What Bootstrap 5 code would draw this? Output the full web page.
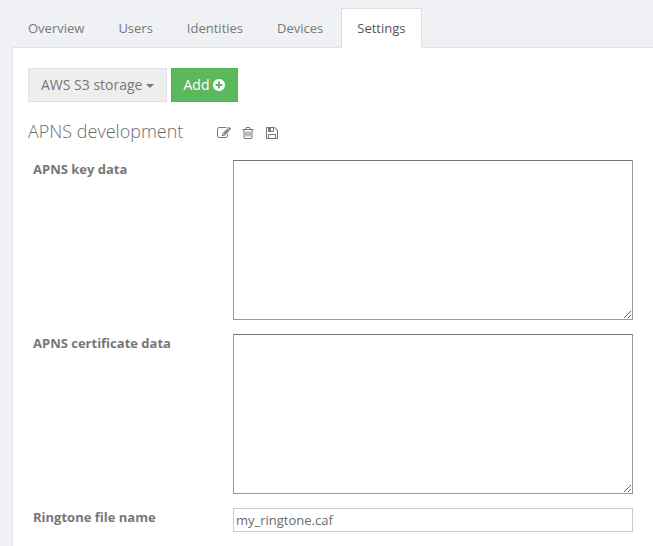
<!DOCTYPE html>
<html lang="en">
<head>
<meta charset="utf-8">
<meta name="viewport" content="width=device-width, initial-scale=1">
<title>Settings</title>
<link href="https://cdn.jsdelivr.net/npm/bootstrap@5.3.0/dist/css/bootstrap.min.css" rel="stylesheet">
<style>
body { font-family: "Open Sans", sans-serif; font-size: 13px; line-height: 18.57px; color: #6a6c6f; background: #f0f1f5; height: 546px; overflow: hidden; }
.page { padding: 8px 0 0 12px; height: 546px; }
.nav-tabs { --bs-nav-tabs-border-color: #e1e2e3; --bs-nav-tabs-border-radius: 0; border-bottom: 0; gap: 2px; }
.nav-tabs .nav-link { padding: 9px 15px; height: 39px; line-height: 20px; color: #777; }
.nav-tabs .nav-link.active { color: #555; background: #fff; border-color: #ddd #ddd #fff; height: 40px; margin-bottom: -1px; position: relative; }
.panel { background: #fff; border: solid #e1e2e3; border-width: 1px 0 0 1px; padding: 20px 20px 0 15px; }
.btn { --bs-btn-border-radius: 0; --bs-btn-font-size: 14px; --bs-btn-line-height: 20px; height: 34px; padding: 6px 12px; }
.btn-storage, .btn-storage:hover { background: #eee; border-color: #e0e0e0; color: #777; }
.btn-storage::after { margin-left: 4px; border-top-width: 4px; border-left-width: 4px; border-right-width: 4px; vertical-align: 2px; }
.btn-add, .btn-add:hover { background: #5cb85c; border-color: #53b053; color: #fff; gap: 3px; width: 67px; padding-left: 11px; font-weight: 500; }
.icon { width: 14px; height: 14px; fill: currentColor; display: block; }
.icon-plus { width: 12px; flex: none; }
.heading { padding-top: 3px; }
h1 { font-size: 18px; font-weight: 300; line-height: 20px; width: 188.5px; color: #6a6c6f; }
.tools { gap: 10px; color: #777; padding-top: 4px; }
.fields { padding: 3px 0 0 5px; gap: 14px; }
.fields label { width: 200px; font-weight: 700; line-height: 19px; color: #777; }
.fields textarea { width: 400px; height: 160px; border: 1px solid #999; border-top-color: #777; resize: both; display: block; }
.fields input { width: 400px; height: 24px; border: 1px solid #ccc; padding: 1px 2px; color: #6a6c6f; }
</style>
</head>
<body>
<div class="page d-flex flex-column">
  <ul class="nav nav-tabs flex-nowrap">
    <li class="nav-item"><a class="nav-link" href="#">Overview</a></li>
    <li class="nav-item"><a class="nav-link" href="#">Users</a></li>
    <li class="nav-item"><a class="nav-link" href="#">Identities</a></li>
    <li class="nav-item"><a class="nav-link" href="#">Devices</a></li>
    <li class="nav-item"><a class="nav-link active" href="#">Settings</a></li>
  </ul>
  <main class="panel flex-grow-1">
    <div class="d-flex gap-1">
      <button class="btn btn-storage dropdown-toggle" type="button">AWS S3 storage</button>
      <button class="btn btn-add d-flex align-items-center justify-content-between" type="button"><span>Add</span>
        <svg class="icon icon-plus" viewBox="128 0 1536 1792"><path d="M1344 960v-128q0-26-19-45t-45-19h-256v-256q0-26-19-45t-45-19h-128q-26 0-45 19t-19 45v256h-256q-26 0-45 19t-19 45v128q0 26 19 45t45 19h256v256q0 26 19 45t45 19h128q26 0 45-19t19-45v-256h256q26 0 45-19t19-45zm320-64q0 209-103 385.500t-279.500 279.500-385.500 103-385.500-103-279.500-279.500-103-385.500 103-385.500 279.500-279.500 385.500-103 385.500 103 279.500 279.500 103 385.500z"/></svg>
      </button>
    </div>
    <div class="heading d-flex align-items-center mt-3">
      <h1 class="mb-0">APNS development</h1>
      <div class="tools d-flex">
        <svg class="icon" viewBox="0 0 1792 1792"><path d="M888 1184l116-116-152-152-116 116v56h96v96h56zm440-720q-16-16-33 1l-350 350q-17 17-1 33t33-1l350-350q17-17 1-33zm80 594v190q0 119-84.500 203.500t-203.500 84.500h-832q-119 0-203.500-84.500t-84.500-203.500v-832q0-119 84.500-203.500t203.500-84.500h832q63 0 117 25 15 7 18 23 3 17-9 29l-49 49q-14 14-32 8-23-6-45-6h-832q-66 0-113 47t-47 113v832q0 66 47 113t113 47h832q66 0 113-47t47-113v-126q0-13 9-22l64-64q15-15 35-7t20 29zm-96-738l288 288-672 672h-288v-288zm444 132l-92 92-288-288 92-92q28-28 68-28t68 28l152 152q28 28 28 68t-28 68z"/></svg>
        <svg class="icon" viewBox="0 0 1792 1792"><path d="M704 736v576q0 14-9 23t-23 9h-64q-14 0-23-9t-9-23v-576q0-14 9-23t23-9h64q14 0 23 9t9 23zm256 0v576q0 14-9 23t-23 9h-64q-14 0-23-9t-9-23v-576q0-14 9-23t23-9h64q14 0 23 9t9 23zm256 0v576q0 14-9 23t-23 9h-64q-14 0-23-9t-9-23v-576q0-14 9-23t23-9h64q14 0 23 9t9 23zm128 724v-948h-896v948q0 22 7 40.500t14.500 27 10.500 8.500h832q3 0 10.500-8.500t14.500-27 7-40.500zm-672-1076h448l-48-117q-7-9-17-11h-317q-10 2-17 11zm928 32v64q0 14-9 23t-23 9h-96v948q0 83-47 143.500t-113 60.500h-832q-66 0-113-58.500t-47-141.500v-952h-96q-14 0-23-9t-9-23v-64q0-14 9-23t23-9h309l70-167q15-37 54-63t79-26h320q40 0 79 26t54 63l70 167h309q14 0 23 9t9 23z"/></svg>
        <svg class="icon" viewBox="0 0 1792 1792"><path d="M512 1536h768v-384h-768v384zm896 0h128v-896q0-14-10-38.500t-20-34.500l-281-281q-10-10-34-20t-39-10v416q0 40-28 68t-68 28h-576q-40 0-68-28t-28-68v-416h-128v1280h128v-416q0-40 28-68t68-28h832q40 0 68 28t28 68v416zm-384-928v-320q0-13-9.500-22.500t-22.500-9.500h-192q-13 0-22.500 9.500t-9.500 22.500v320q0 13 9.500 22.500t22.500 9.500h192q13 0 22.500-9.500t9.500-22.500zm640 32v928q0 40-28 68t-68 28h-1344q-40 0-68-28t-28-68v-1344q0-40 28-68t68-28h928q40 0 88 20t76 48l280 280q28 28 48 76t20 88z"/></svg>
      </div>
    </div>
    <form class="fields d-flex flex-column mt-3">
      <div class="d-flex align-items-start"><label for="key">APNS key data</label><textarea id="key"></textarea></div>
      <div class="d-flex align-items-start"><label for="cert">APNS certificate data</label><textarea id="cert"></textarea></div>
      <div class="d-flex align-items-start"><label for="ring">Ringtone file name</label><input id="ring" type="text" value="my_ringtone.caf"></div>
    </form>
  </main>
</div>
<script src="https://cdn.jsdelivr.net/npm/bootstrap@5.3.0/dist/js/bootstrap.bundle.min.js"></script>
</body>
</html>
